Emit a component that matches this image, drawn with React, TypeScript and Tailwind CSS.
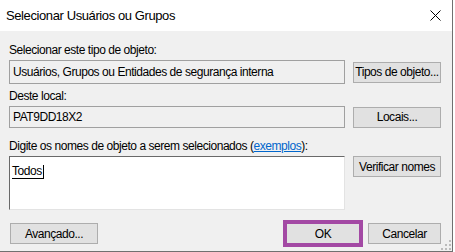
import React from 'react';

const font = { fontFamily: '"Liberation Sans", Arial, sans-serif' };

const Btn = ({ label, className = '' }: { label: string; className?: string }) => (
  <div
    className={`flex h-[21px] items-center justify-center border border-[#adadad] bg-[#e1e1e1] text-[12px] tracking-[-0.45px] text-black ${className}`}
  >
    {label}
  </div>
);

const ReadBox = ({ value, className = '' }: { value: string; className?: string }) => (
  <div
    className={`flex w-[336px] items-center border border-[#a0a0a0] bg-[#f0f0f0] pl-[3px] text-[12px] tracking-[-0.45px] text-black ${className}`}
  >
    {value}
  </div>
);

export default function App() {
  return (
    <div className="relative h-[252px] w-[455px] overflow-hidden bg-white" style={font}>
      <div className="flex h-[252px] w-[453px] flex-col border-r border-b border-[#707070]">
        {/* title bar */}
        <div className="flex h-[31px] shrink-0 items-center justify-between bg-white pl-[6px] pr-[10px]">
          <span className="text-[13px] tracking-[-0.4px] text-black">Selecionar Usuários ou Grupos</span>
          <svg width="11" height="11" viewBox="0 0 11 11" className="mr-[1px]">
            <path d="M0.5 0.5L10.5 10.5M10.5 0.5L0.5 10.5" stroke="#000" strokeWidth="1" />
          </svg>
        </div>

        {/* body */}
        <div className="relative flex flex-1 flex-col bg-[#f0f0f0] pl-[9px] pt-[12px]">
          <div className="h-[15px] text-[12px] leading-[15px] tracking-[-0.45px]">Selecionar este tipo de objeto:</div>
          <div className="mt-[2px] flex items-center gap-[8px]">
            <ReadBox value="Usuários, Grupos ou Entidades de segurança interna" className="h-[24px]" />
            <Btn label="Tipos de objeto..." className="w-[88px]" />
          </div>

          <div className="mt-[5px] h-[15px] text-[12px] leading-[15px] tracking-[-0.45px]">Deste local:</div>
          <div className="mt-[2px] flex items-center gap-[8px]">
            <ReadBox value="PAT9DD18X2" className="h-[22px]" />
            <Btn label="Locais..." className="w-[88px]" />
          </div>

          <div className="mt-[11px] h-[15px] text-[12px] leading-[15px] tracking-[-0.45px]">
            Digite os nomes de objeto a serem selecionados (
            <span className="text-[#0066cc] underline">exemplos</span>):
          </div>
          <div className="mt-[2px] flex items-start gap-[8px]">
            <div className="h-[54px] w-[336px] border-t border-l border-[#696969] border-r-[#e3e3e3] border-b-[#e3e3e3] border-r border-b bg-white pl-[2px] pt-[1px]">
              <span className="inline-block border-b border-r border-black pr-[1px] text-[12px] leading-[13px] tracking-[-0.45px]">
                Todos
              </span>
            </div>
            <Btn label="Verificar nomes" className="w-[88px]" />
          </div>

          {/* bottom buttons */}
          <div className="mt-[10px] flex items-center">
            <Btn label="Avançado..." className="ml-[1px] w-[88px]" />
            <div className="ml-auto mr-[11px] flex items-center gap-[5px]">
              <div className="flex h-[27px] w-[80px] items-center justify-center border-[4px] border-[#a349a4] bg-[#e1e1e1] text-[12px] tracking-[-0.45px]">
                OK
              </div>
              <Btn label="Cancelar" className="w-[73px]" />
            </div>
          </div>

          {/* resize grip */}
          <svg width="10" height="10" viewBox="0 0 10 10" className="absolute bottom-[1px] right-[1px]">
            <rect x="8" y="0" width="2" height="2" fill="#bcbcbc" />
            <rect x="4" y="4" width="2" height="2" fill="#bcbcbc" />
            <rect x="8" y="4" width="2" height="2" fill="#bcbcbc" />
            <rect x="0" y="8" width="2" height="2" fill="#bcbcbc" />
            <rect x="4" y="8" width="2" height="2" fill="#bcbcbc" />
            <rect x="8" y="8" width="2" height="2" fill="#bcbcbc" />
          </svg>
        </div>
      </div>
    </div>
  );
}
